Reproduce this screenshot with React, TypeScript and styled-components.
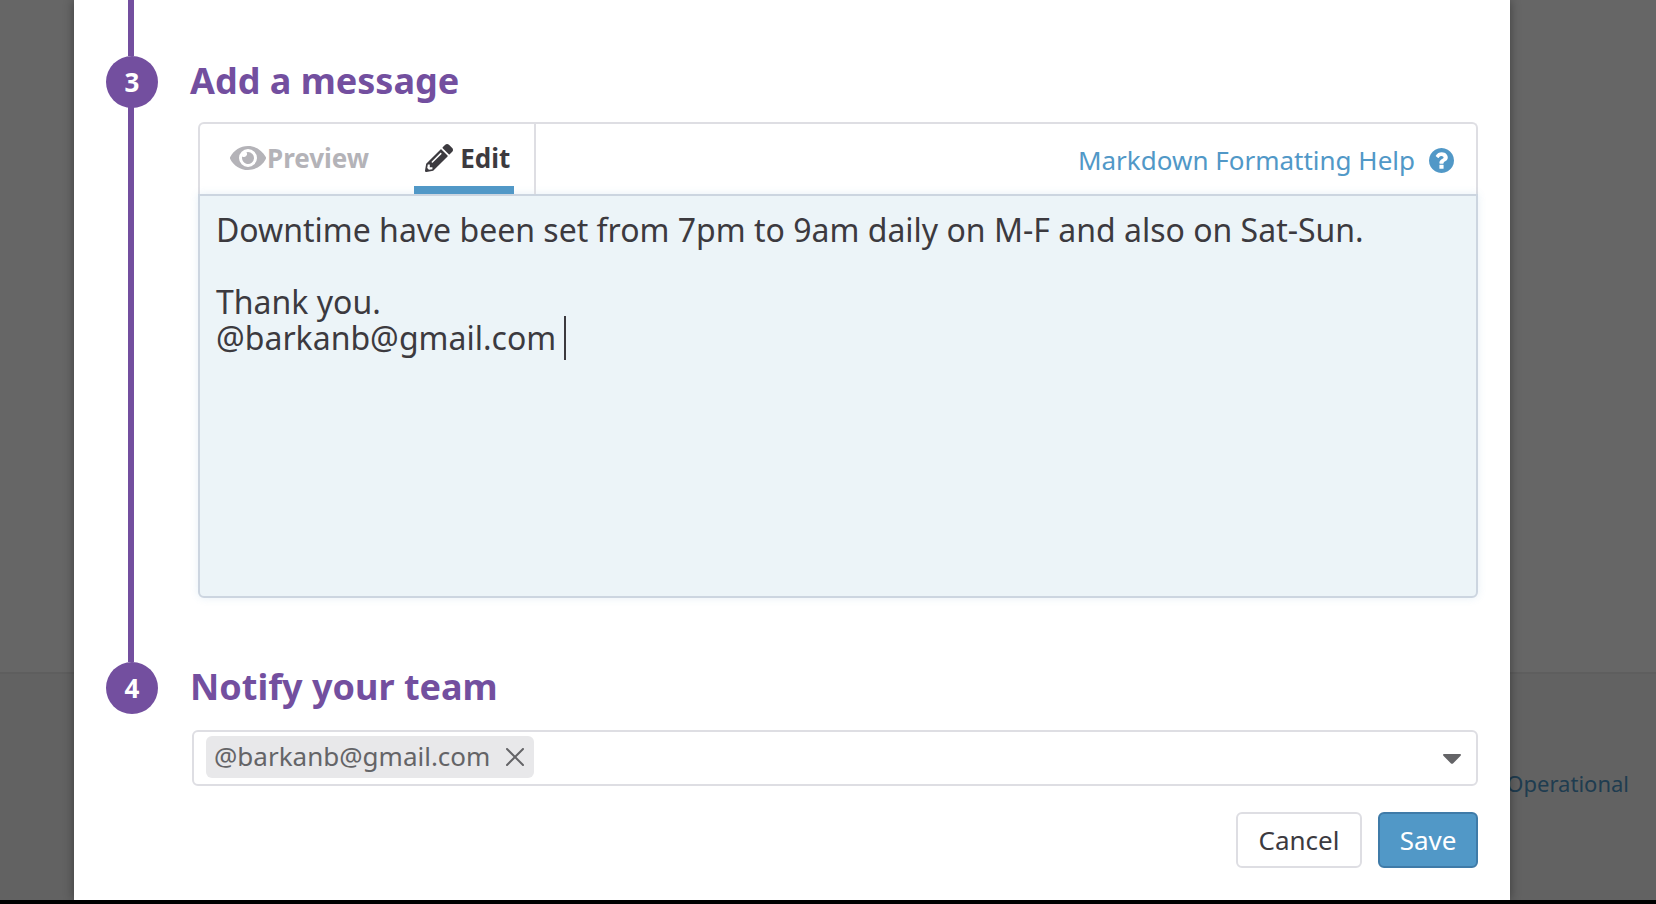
import React, { useState } from "react";
import styled, { createGlobalStyle } from "styled-components";
import { FaPencilAlt } from "react-icons/fa";

const purple = "#734f9f";
const blue = "#5198c7";
const line = "#dedee3";
const ink = "#3c3a3f";

const GlobalStyle = createGlobalStyle`
  *, *::before, *::after { box-sizing: border-box; }
  body {
    margin: 0;
    background: #000;
    color: ${ink};
    font-family: "Noto Sans", sans-serif;
    font-size: 26px;
  }
  button, input, textarea { font: inherit; color: inherit; }
  svg { flex: none; }
`;

const Shell = styled.div`
  display: flex;
  flex-direction: column;
  min-height: 100vh;
  border-bottom: 4px solid #000;
`;

const Stack = styled.div`
  flex: 1;
  display: grid;
  grid-template-columns: minmax(0, 1fr);

  > * {
    grid-area: 1 / 1;
  }
`;

const Page = styled.div`
  display: flex;
  flex-direction: column;
  justify-content: flex-end;
  background: #fff;
`;

const Footer = styled.footer`
  height: 228px;
  padding: 93px 27px 0 0;
  border-top: 2px solid #ebebeb;
  background: #f5f5f5;
  text-align: right;
  font-size: 22px;
  line-height: 32px;
`;

const StatusLink = styled.a`
  color: #4e97c7;
  text-decoration: none;
`;

const Overlay = styled.div`
  z-index: 1;
  display: flex;
  padding: 0 146px 0 74px;
  background: rgba(0, 0, 0, 0.6);
`;

const Dialog = styled.form`
  flex: 1;
  min-width: 0;
  padding: 0 32px 32px;
  background: #fff;
  box-shadow: 0 0 10px rgba(0, 0, 0, 0.4);
`;

const Step = styled.section`
  display: grid;
  grid-template-columns: 52px minmax(0, 1fr);
  column-gap: 32px;
`;

const Rail = styled.div`
  display: flex;
  flex-direction: column;
`;

const Track = styled.div`
  flex: 1;
  width: 6px;
  min-height: 56px;
  margin-left: 22px;
  background: ${purple};
`;

const Marker = styled.div`
  flex: none;
  display: flex;
  align-items: center;
  justify-content: center;
  width: 52px;
  height: 52px;
  margin-bottom: -1px;
  border-radius: 50%;
  background: ${purple};
  color: #fff;
  font-size: 26px;
  font-weight: 700;
`;

const Title = styled.h2`
  margin: 0 0 16px;
  color: ${purple};
  font-size: 36px;
  line-height: 50px;
`;

const Editor = styled.div`
  position: relative;
  margin: 0 0 64px 8px;
`;

const Toolbar = styled.div`
  display: flex;
  align-items: stretch;
  justify-content: space-between;
  height: 72px;
  padding-right: 22px;
  border: 2px solid ${line};
  border-bottom: 0;
  border-radius: 6px 6px 0 0;
`;

const Tabs = styled.div`
  display: flex;
  padding: 0 20px;
  border-right: 2px solid ${line};
`;

const Tab = styled.button<{ $active?: boolean }>`
  display: flex;
  align-items: center;
  gap: ${(p) => (p.$active ? 7 : 1)}px;
  padding: 6px ${(p) => (p.$active ? 4 : 10)}px 0 ${(p) => (p.$active ? 11 : 10)}px;
  margin-left: ${(p) => (p.$active ? 35 : 0)}px;
  border: 0;
  border-bottom: 8px solid ${(p) => (p.$active ? blue : "transparent")};
  background: none;
  color: ${(p) => (p.$active ? ink : "#b4b3b8")};
  font-weight: 700;
  white-space: nowrap;
  cursor: pointer;
`;

const HelpLink = styled.a`
  display: flex;
  align-items: center;
  gap: 14px;
  padding-top: 2px;
  color: ${blue};
  text-decoration: none;
  white-space: nowrap;
`;

const Message = styled.textarea`
  display: block;
  width: 100%;
  height: 404px;
  padding: 16px;
  border: 2px solid #ccd5e0;
  border-radius: 0 0 6px 6px;
  outline: 0;
  background: #ecf4f8;
  box-shadow: 0 0 8px rgba(81, 152, 199, 0.14);
  font-size: 32px;
  line-height: 36px;
  caret-color: transparent;
  resize: none;
`;

const TextCursor = styled.span`
  position: absolute;
  left: 366px;
  top: 194px;
  width: 2px;
  height: 44px;
  background: ${ink};
  pointer-events: none;
`;

const Picker = styled.div`
  display: flex;
  align-items: center;
  gap: 12px;
  height: 56px;
  margin: 18px 0 26px 2px;
  padding: 0 15px 0 12px;
  border: 2px solid ${line};
  border-radius: 6px;
`;

const Chip = styled.span`
  display: flex;
  align-items: center;
  gap: 16px;
  height: 42px;
  padding: 0 10px 0 8px;
  margin-bottom: 2px;
  border-radius: 6px;
  background: #e8e8ea;
  color: #646467;
  line-height: 34px;
`;

const ChipText = styled.span`
  padding-bottom: 2px;
`;

const IconButton = styled.button`
  display: flex;
  padding: 0;
  border: 0;
  background: none;
  color: #646467;
  cursor: pointer;
`;

const PickerInput = styled.input`
  flex: 1;
  min-width: 0;
  border: 0;
  outline: 0;
  background: none;
`;

const Actions = styled.div`
  display: flex;
  justify-content: flex-end;
  gap: 16px;
`;

const Button = styled.button<{ $primary?: boolean }>`
  width: ${(p) => (p.$primary ? 100 : 126)}px;
  height: 56px;
  padding: 0;
  border: 2px solid ${(p) => (p.$primary ? "#3f7ba8" : line)};
  border-radius: 6px;
  background: ${(p) => (p.$primary ? blue : "#fff")};
  color: ${(p) => (p.$primary ? "#fff" : ink)};
  cursor: pointer;
`;

const EyeIcon = () => (
  <svg width="36" height="32" viewBox="0 0 576 512" fill="currentColor" aria-hidden="true">
    <path d="M572.52 241.400C518.290 135.590 410.930 64 288 64S57.680 135.640 3.480 241.410a32.350 32.350 0 0 0 0 29.190C57.710 376.410 165.070 448 288 448s230.320-71.640 284.520-177.410a32.350 32.350 0 0 0 0-29.190zM288 400a144 144 0 1 1 144-144 143.930 143.930 0 0 1-144 144zm0-240a95.310 95.310 0 0 0-25.310 3.790 47.850 47.850 0 0 1-66.900 66.900A95.780 95.780 0 1 0 288 160z" />
  </svg>
);

const HelpIcon = () => (
  <svg width="25" height="25" viewBox="128 128 1536 1536" fill="currentColor" aria-hidden="true">
    <path d="M1024 1376v-192q0-14-9-23t-23-9h-192q-14 0-23 9t-9 23v192q0 14 9 23t23 9h192q14 0 23-9t9-23zm256-672q0-88-55.500-163t-138.500-116-170-41q-243 0-371 213-15 24 8 42l132 100q7 6 19 6 16 0 25-12 53-68 86-92 34-24 86-24 48 0 85.500 26t37.500 59q0 38-20 61t-68 45q-63 28-115.500 86.500t-52.500 125.500v36q0 14 9 23t23 9h192q14 0 23-9t9-23q0-19 21.500-49.500t54.500-49.500q32-18 49-28.500t46-35 44.500-48 28-60.500 12.500-81zm384 192q0 209-103 385.500t-279.500 279.500-385.500 103-385.500-103-279.500-279.500-103-385.500 103-385.500 279.500-279.500 385.500-103 385.500 103 279.500 279.500 103 385.500z" />
  </svg>
);

const CloseIcon = () => (
  <svg width="18" height="18" viewBox="0 0 18 18" fill="none" stroke="currentColor" strokeWidth="2" strokeLinecap="round" aria-hidden="true">
    <path d="M1 1l16 16M17 1L1 17" />
  </svg>
);

const ArrowIcon = () => (
  <svg width="18" height="12" viewBox="0 -2 18 12" fill="currentColor" aria-hidden="true">
    <path d="M1 0h16c1 0 1.300 1 .6 1.700l-7.600 7.700c-.6.600-1.400.600-2 0L.4 1.700C-.3 1 0 0 1 0z" />
  </svg>
);

const initialMessage =
  "Downtime have been set from 7pm to 9am daily on M-F and also on Sat-Sun.\n\nThank you.\n@barkanb@gmail.com ";

export default function App() {
  const [message, setMessage] = useState(initialMessage);
  return (
    <>
      <GlobalStyle />
      <Shell>
        <Stack>
          <Page>
            <Footer>
              <StatusLink href="#status">Operational</StatusLink>
            </Footer>
          </Page>
          <Overlay>
            <Dialog onSubmit={(e) => e.preventDefault()}>
              <Rail>
                <Track />
              </Rail>
              <Step>
                <Rail>
                  <Marker>3</Marker>
                  <Track />
                </Rail>
                <div>
                  <Title id="message-title">Add a message</Title>
                  <Editor>
                    <Toolbar>
                      <Tabs>
                        <Tab type="button">
                          <EyeIcon />
                          Preview
                        </Tab>
                        <Tab type="button" $active>
                          <FaPencilAlt size={28} />
                          Edit
                        </Tab>
                      </Tabs>
                      <HelpLink href="#markdown">
                        Markdown Formatting Help
                        <HelpIcon />
                      </HelpLink>
                    </Toolbar>
                    <Message
                      aria-labelledby="message-title"
                      spellCheck={false}
                      value={message}
                      onChange={(e) => setMessage(e.target.value)}
                    />
                    <TextCursor />
                  </Editor>
                </div>
              </Step>
              <Step>
                <Rail>
                  <Marker>4</Marker>
                </Rail>
                <div>
                  <Title id="team-title">Notify your team</Title>
                  <Picker>
                    <Chip>
                      <ChipText>@barkanb@gmail.com</ChipText>
                      <IconButton type="button" aria-label="Remove @barkanb@gmail.com">
                        <CloseIcon />
                      </IconButton>
                    </Chip>
                    <PickerInput aria-labelledby="team-title" />
                    <IconButton type="button" aria-label="Show team members">
                      <ArrowIcon />
                    </IconButton>
                  </Picker>
                </div>
              </Step>
              <Actions>
                <Button type="button">Cancel</Button>
                <Button type="submit" $primary>
                  Save
                </Button>
              </Actions>
            </Dialog>
          </Overlay>
        </Stack>
      </Shell>
    </>
  );
}
